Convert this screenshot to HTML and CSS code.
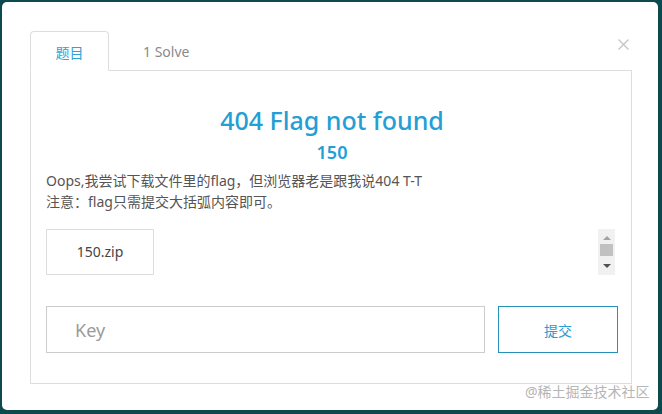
FILE: index.html
```html
<!DOCTYPE html>
<html lang="zh-CN">
<head>
<meta charset="utf-8">
<link rel="stylesheet" href="styles.css">
</head>
<body>
<div class="modal">
  <button class="close" aria-label="close">
    <svg width="11" height="11" viewBox="0 0 11 11"><path d="M0.5 0.5L10.5 10.5M10.5 0.5L0.5 10.5" stroke="#c4c4c4" stroke-width="1.3" fill="none"/></svg>
  </button>
  <div class="tabs">
    <div class="tab active">题目</div>
    <div class="tab">1 Solve</div>
    <div class="tab-fill"></div>
  </div>
  <div class="panel">
    <h2 class="title">404 Flag not found</h2>
    <div class="points">150</div>
    <div class="desc">
      <p>Oops,我尝试下载文件里的flag，但浏览器老是跟我说404 T-T</p>
      <p>注意：flag只需提交大括弧内容即可。</p>
    </div>
    <div class="files">
      <div class="file">150.zip</div>
      <div class="scrollbar">
        <span class="arrow up"></span>
        <span class="thumb"></span>
        <span class="arrow down"></span>
      </div>
    </div>
    <div class="submit-row">
      <input class="key" type="text" placeholder="Key">
      <button class="submit">提交</button>
    </div>
  </div>
</div>
<div class="watermark">@稀土掘金技术社区</div>
</body>
</html>
```
FILE: styles.css
```css
html, body {
  margin: 0;
  padding: 0;
  height: 100%;
}
body {
  background: #0d4a50;
  font-family: "Noto Sans", "Noto Sans CJK SC", sans-serif;
  overflow: hidden;
  position: relative;
}
.modal {
  position: relative;
  margin: 2px 4px 0 2px;
  height: 408px;
  background: #fff;
  border-radius: 5px;
  box-sizing: border-box;
  padding: 29px 26px 0 28px;
}
.close {
  position: absolute;
  top: 37px;
  right: 29px;
  border: 0;
  background: none;
  padding: 0;
  width: 11px;
  height: 11px;
  display: block;
}
.close svg { display: block; }
.tabs {
  display: flex;
  height: 40px;
}
.tab {
  box-sizing: border-box;
  height: 40px;
  line-height: 42px;
  font-size: 14px;
  color: #8a8a8a;
  border-bottom: 1px solid #ddd;
  padding: 0 0 0 34px;
}
.tab.active {
  width: 79px;
  padding: 0;
  text-align: center;
  color: #2ea3d8;
  border: 1px solid #ddd;
  border-bottom-color: transparent;
  border-radius: 4px 4px 0 0;
}
.tab-fill {
  flex: 1;
  border-bottom: 1px solid #ddd;
}
.panel {
  box-sizing: border-box;
  height: 313px;
  border: 1px solid #ddd;
  border-top: 0;
  padding: 33px 13px 0 15px;
}
.title {
  margin: 0;
  text-align: center;
  font-size: 25px;
  line-height: 32px;
  font-weight: 500;
  color: #239fd5;
}
.points {
  margin-top: 5px;
  text-align: center;
  font-size: 18px;
  line-height: 22px;
  font-weight: 600;
  color: #239fd5;
}
.desc {
  margin-top: 7px;
  font-size: 14px;
  line-height: 21px;
  color: #555;
}
.desc p { margin: 0; }
.files {
  margin-top: 17px;
  display: flex;
  justify-content: space-between;
  align-items: flex-start;
}
.file {
  box-sizing: border-box;
  width: 108px;
  height: 46px;
  border: 1px solid #ddd;
  text-align: center;
  line-height: 44px;
  font-size: 14px;
  color: #444;
}
.scrollbar {
  width: 17px;
  height: 46px;
  margin-right: 3px;
  background: #f1f1f1;
  display: flex;
  flex-direction: column;
  align-items: center;
  padding-top: 7px;
  box-sizing: border-box;
}
.arrow {
  width: 0;
  height: 0;
  border-left: 4px solid transparent;
  border-right: 4px solid transparent;
}
.arrow.up { border-bottom: 4px solid #a3a3a3; }
.arrow.down { border-top: 4px solid #505050; }
.thumb {
  width: 13px;
  height: 12px;
  background: #c1c1c1;
  margin: 4px 0 8px;
}
.submit-row {
  margin-top: 31px;
  display: flex;
  gap: 13px;
}
.key {
  flex: 1;
  box-sizing: border-box;
  height: 47px;
  border: 1px solid #ccc;
  padding: 0 0 0 28px;
  font-family: inherit;
  font-size: 18px;
  color: #555;
  outline: none;
}
.key::placeholder { color: #9a9a9a; }
.submit {
  box-sizing: border-box;
  width: 120px;
  height: 47px;
  border: 1px solid #2590b8;
  background: #fff;
  color: #2a9ad0;
  font-family: inherit;
  font-size: 14px;
}
.watermark {
  position: absolute;
  left: 525px;
  top: 381px;
  font-size: 14px;
  color: #b5b5b5;
}
```
